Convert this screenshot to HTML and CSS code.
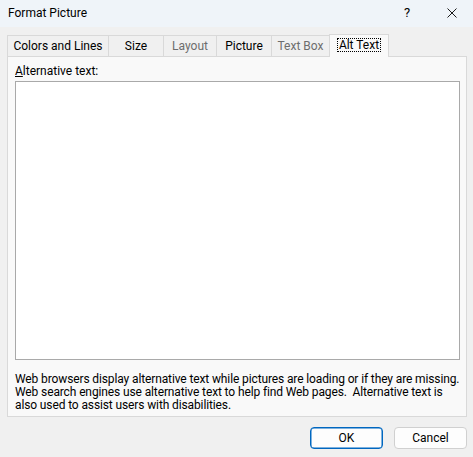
FILE: index.html
```html
<!DOCTYPE html>
<html>
<head>
<meta charset="utf-8">
<link rel="stylesheet" href="styles.css">
</head>
<body>
<div class="window">
  <div class="titlebar">
    <span class="title">Format Picture</span>
    <div class="controls">
      <span class="help">?</span>
      <svg class="close" width="10" height="10" viewBox="0 0 10 10"><path d="M0.5 0.5 L9.5 9.5 M9.5 0.5 L0.5 9.5" stroke="#1a1a1a" stroke-width="1" fill="none"/></svg>
    </div>
  </div>
  <div class="content">
    <div class="tabs">
      <div class="tab t1">Colors and Lines</div>
      <div class="tab t2">Size</div>
      <div class="tab t3 disabled">Layout</div>
      <div class="tab t4">Picture</div>
      <div class="tab t5 disabled">Text Box</div>
      <div class="tab t6 selected"><span class="focus">Alt Text</span></div>
    </div>
    <div class="panel">
      <div class="label"><u>A</u>lternative text:</div>
      <div class="textarea"></div>
      <div class="desc">Web browsers display alternative text while pictures are loading or if they are missing.<br>Web search engines use alternative text to help find Web pages.&nbsp; Alternative text is<br>also used to assist users with disabilities.</div>
    </div>
    <div class="buttons">
      <div class="btn ok">OK</div>
      <div class="btn">Cancel</div>
    </div>
  </div>
</div>
</body>
</html>
```
FILE: styles.css
```css
* { box-sizing: border-box; }
html, body { margin: 0; padding: 0; }
body {
  width: 473px;
  height: 457px;
  background: #f0f0f0;
  font-family: Roboto, "Liberation Sans", sans-serif;
  font-size: 12px;
  color: #000;
  overflow: hidden;
}
.window { display: flex; flex-direction: column; height: 457px; }
.titlebar {
  height: 27px;
  background: #eff4f9;
  display: flex;
  align-items: center;
  justify-content: space-between;
  padding-left: 8px;
}
.title { line-height: 16px; margin-top: -2px; }
.controls { display: flex; align-items: center; height: 100%; }
.help { width: 10px; text-align: center; margin-right: 35px; font-size: 13px; margin-top: -2px; }
.close { margin-right: 16px; margin-top: -2px; }
.content { padding: 7px 6px 0 7px; display: flex; flex-direction: column; }
.tabs {
  display: flex;
  align-items: flex-end;
  height: 23px;
  margin-bottom: -1px;
  position: relative;
  z-index: 1;
}
.tab {
  height: 22px;
  border: 1px solid #d9d9d9;
  background: #f0f0f0;
  display: flex;
  align-items: center;
  justify-content: center;
  padding-bottom: 1px;
  margin-left: -1px;
}
.t1 { width: 102px; margin-left: 0; }
.t2 { width: 56px; }
.t3 { width: 54px; }
.t4 { width: 56px; }
.t5 { width: 59px; }
.t6 { width: 60px; }
.disabled { color: #6d6d6d; }
.tab.selected {
  height: 23px;
  background: #f9f9f9;
  border-bottom: none;
  padding-bottom: 2px;
}
.focus {
  border: 1px dotted #000;
  padding: 0 1px;
  line-height: 12px;
  height: 14px;
  display: inline-flex;
  align-items: center;
}
.panel {
  height: 361px;
  border: 1px solid #d9d9d9;
  background: #f9f9f9;
  padding: 6px 6px 4px 7px;
  display: flex;
  flex-direction: column;
}
.label { line-height: 16px; height: 16px; margin-bottom: 2px; }
.textarea {
  height: 279px;
  background: #fff;
  border: 1px solid #a9a9a9;
  margin-bottom: 13px;
}
.desc { line-height: 13px; white-space: nowrap; letter-spacing: -0.12px; }
.buttons {
  display: flex;
  justify-content: flex-end;
  gap: 11px;
  margin-top: 10px;
}
.btn {
  width: 73px;
  height: 22px;
  border: 1px solid #d0d0d0;
  border-radius: 4px;
  background: #fdfdfd;
  display: flex;
  align-items: center;
  justify-content: center;
  padding-bottom: 1px;
}
.btn.ok { border: 1px solid #0067c0; box-shadow: inset 0 0 0 0.5px #0067c0; }
```
